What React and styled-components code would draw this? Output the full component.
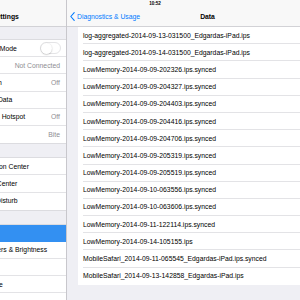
import React from 'react';
import styled, {createGlobalStyle} from 'styled-components';

const GlobalStyle = createGlobalStyle`
    html, body {
        margin: 0;
        padding: 0;
        background: #efeff4;
    }
    body {
        font-family: "Liberation Sans", Arial, sans-serif;
        -webkit-font-smoothing: antialiased;
    }
`;

const Viewport = styled.div`
    width: 300px;
    height: 300px;
    overflow: hidden;
    position: relative;
`;

const Screen = styled.div`
    display: flex;
    width: 408px;
    height: 300px;
    margin-left: -60px;
    background: #efeff4;
`;

const StatusTime = styled.div`
    position: absolute;
    top: 1px;
    left: 0;
    right: 0;
    padding-left: 10px;
    text-align: center;
    font-size: 4.6px;
    font-weight: bold;
    color: #000;
    line-height: 6px;
`;

const Master = styled.div`
    width: 126px;
    flex: none;
    border-right: 1px solid #c8c7cc;
    display: flex;
    flex-direction: column;
`;

const Detail = styled.div`
    flex: 1;
    display: flex;
    flex-direction: column;
    min-width: 0;
`;

const NavBar = styled.div`
    height: 27px;
    box-sizing: border-box;
    padding-top: 7px;
    background: #f8f8f8;
    border-bottom: 1px solid #d2d2d6;
    display: flex;
    align-items: center;
    justify-content: ${p => (p.$center ? 'center' : 'flex-start')};
    position: relative;
    flex: none;
`;

const NavTitle = styled.div`
    font-size: 6.8px;
    font-weight: bold;
    color: #000;
    margin-left: ${p => p.$offset || 0}px;
`;

const BackButton = styled.div`
    position: absolute;
    left: 3px;
    top: 7px;
    bottom: 0;
    display: flex;
    align-items: center;
    gap: 2px;
    color: #007aff;
    font-size: 6.8px;
`;

const MasterBody = styled.div`
    flex: 1;
    padding-top: 12px;
    display: flex;
    flex-direction: column;
    gap: 13px;
    overflow: hidden;
`;

const Group = styled.div`
    background: #fff;
    border-top: 1px solid #dcdce0;
    border-bottom: 1px solid #dcdce0;
    display: flex;
    flex-direction: column;
    flex: none;
`;

const Row = styled.div`
    height: 17.2px;
    box-sizing: border-box;
    display: flex;
    padding-left: 33px;
    background: ${p => (p.$selected ? '#3390f2' : '#fff')};
    color: ${p => (p.$selected ? '#fff' : '#000')};
    font-size: 6.8px;
    flex: none;
`;

const RowInner = styled.div`
    flex: 1;
    display: flex;
    align-items: center;
    justify-content: space-between;
    padding-right: ${p => p.$pad ?? 6}px;
    border-bottom: 1px solid ${p => (p.$last ? 'transparent' : '#e3e3e6')};
    white-space: nowrap;
    min-width: 0;
`;

const Value = styled.span`
    color: #8e8e93;
`;

const Toggle = styled.div`
    width: 21px;
    height: 12px;
    box-sizing: border-box;
    border-radius: 6px;
    border: 1px solid #e4e4e6;
    background: #fff;
    display: flex;
    align-items: center;
`;

const Knob = styled.div`
    width: 11px;
    height: 11px;
    margin-left: -0.5px;
    border-radius: 50%;
    background: #fff;
    box-shadow: 0 0.5px 1.5px rgba(0, 0, 0, 0.3);
`;

const DetailBody = styled.div`
    flex: 1;
    padding: 0 11px;
    overflow: hidden;
`;

const Card = styled.div`
    background: #fff;
    display: flex;
    flex-direction: column;
`;

const FileRow = styled.div`
    height: 17.2px;
    box-sizing: border-box;
    display: flex;
    padding-left: 5px;
    font-size: 6.8px;
    color: #000;
`;

const FileName = styled.div`
    flex: 1;
    display: flex;
    align-items: center;
    border-bottom: 1px solid ${p => (p.$last ? 'transparent' : '#e3e3e6')};
    white-space: nowrap;
`;

const groups = [
    [
        {label: 'Airplane Mode', toggle: true},
        {label: 'Wi-Fi', value: 'Not Connected'},
        {label: 'Bluetooth', value: 'Off'},
        {label: 'Cellular Data'},
        {label: 'Personal Hotspot', value: 'Off'},
        {label: 'Carrier', value: 'Bite'},
    ],
    [
        {label: 'Notification Center'},
        {label: 'Control Center'},
        {label: 'Do Not Disturb'},
    ],
    [
        {label: 'General', selected: true},
        {label: 'Wallpapers & Brightness'},
        {label: 'Sounds'},
        {label: 'Passcode'},
        {label: 'Privacy'},
    ],
];

const files = [
    'log-aggregated-2014-09-13-031500_Edgardas-iPad.ips',
    'log-aggregated-2014-09-14-031500_Edgardas-iPad.ips',
    'LowMemory-2014-09-09-202326.ips.synced',
    'LowMemory-2014-09-09-204327.ips.synced',
    'LowMemory-2014-09-09-204403.ips.synced',
    'LowMemory-2014-09-09-204416.ips.synced',
    'LowMemory-2014-09-09-204706.ips.synced',
    'LowMemory-2014-09-09-205319.ips.synced',
    'LowMemory-2014-09-09-205519.ips.synced',
    'LowMemory-2014-09-10-063556.ips.synced',
    'LowMemory-2014-09-10-063606.ips.synced',
    'LowMemory-2014-09-11-122114.ips.synced',
    'LowMemory-2014-09-14-105155.ips',
    'MobileSafari_2014-09-11-065545_Edgardas-iPad.ips.synced',
    'MobileSafari_2014-09-13-142858_Edgardas-iPad.ips',
];

const Chevron = () => (
    <svg width="5" height="9" viewBox="0 0 5 9">
        <path d="M4.2 0.6 L0.8 4.5 L4.2 8.4" fill="none" stroke="#007aff" strokeWidth="1.1" strokeLinecap="round" strokeLinejoin="round" />
    </svg>
);

const App = () => {
    return (
        <Viewport>
            <GlobalStyle />
            <Screen>
                <Master>
                    <NavBar>
                        <NavTitle $offset={52}>Settings</NavTitle>
                    </NavBar>
                    <MasterBody>
                        {groups.map((rows, g) => (
                            <Group key={g}>
                                {rows.map(({label, value, toggle, selected}, i) => (
                                    <Row key={i} $selected={selected}>
                                        <RowInner $last={i === rows.length - 1 || selected} $pad={toggle ? 5 : 6}>
                                            <span>{label}</span>
                                            {value && <Value>{value}</Value>}
                                            {toggle && <Toggle><Knob /></Toggle>}
                                        </RowInner>
                                    </Row>
                                ))}
                            </Group>
                        ))}
                    </MasterBody>
                </Master>
                <Detail>
                    <NavBar $center>
                        <BackButton>
                            <Chevron />
                            <span>Diagnostics &amp; Usage</span>
                        </BackButton>
                        <NavTitle>Data</NavTitle>
                    </NavBar>
                    <DetailBody>
                        <Card>
                            {files.map((name, i) => (
                                <FileRow key={i}>
                                    <FileName $last={i === files.length - 1}>{name}</FileName>
                                </FileRow>
                            ))}
                        </Card>
                    </DetailBody>
                </Detail>
            </Screen>
            <StatusTime>10:52</StatusTime>
        </Viewport>
    );
};

export default App;
